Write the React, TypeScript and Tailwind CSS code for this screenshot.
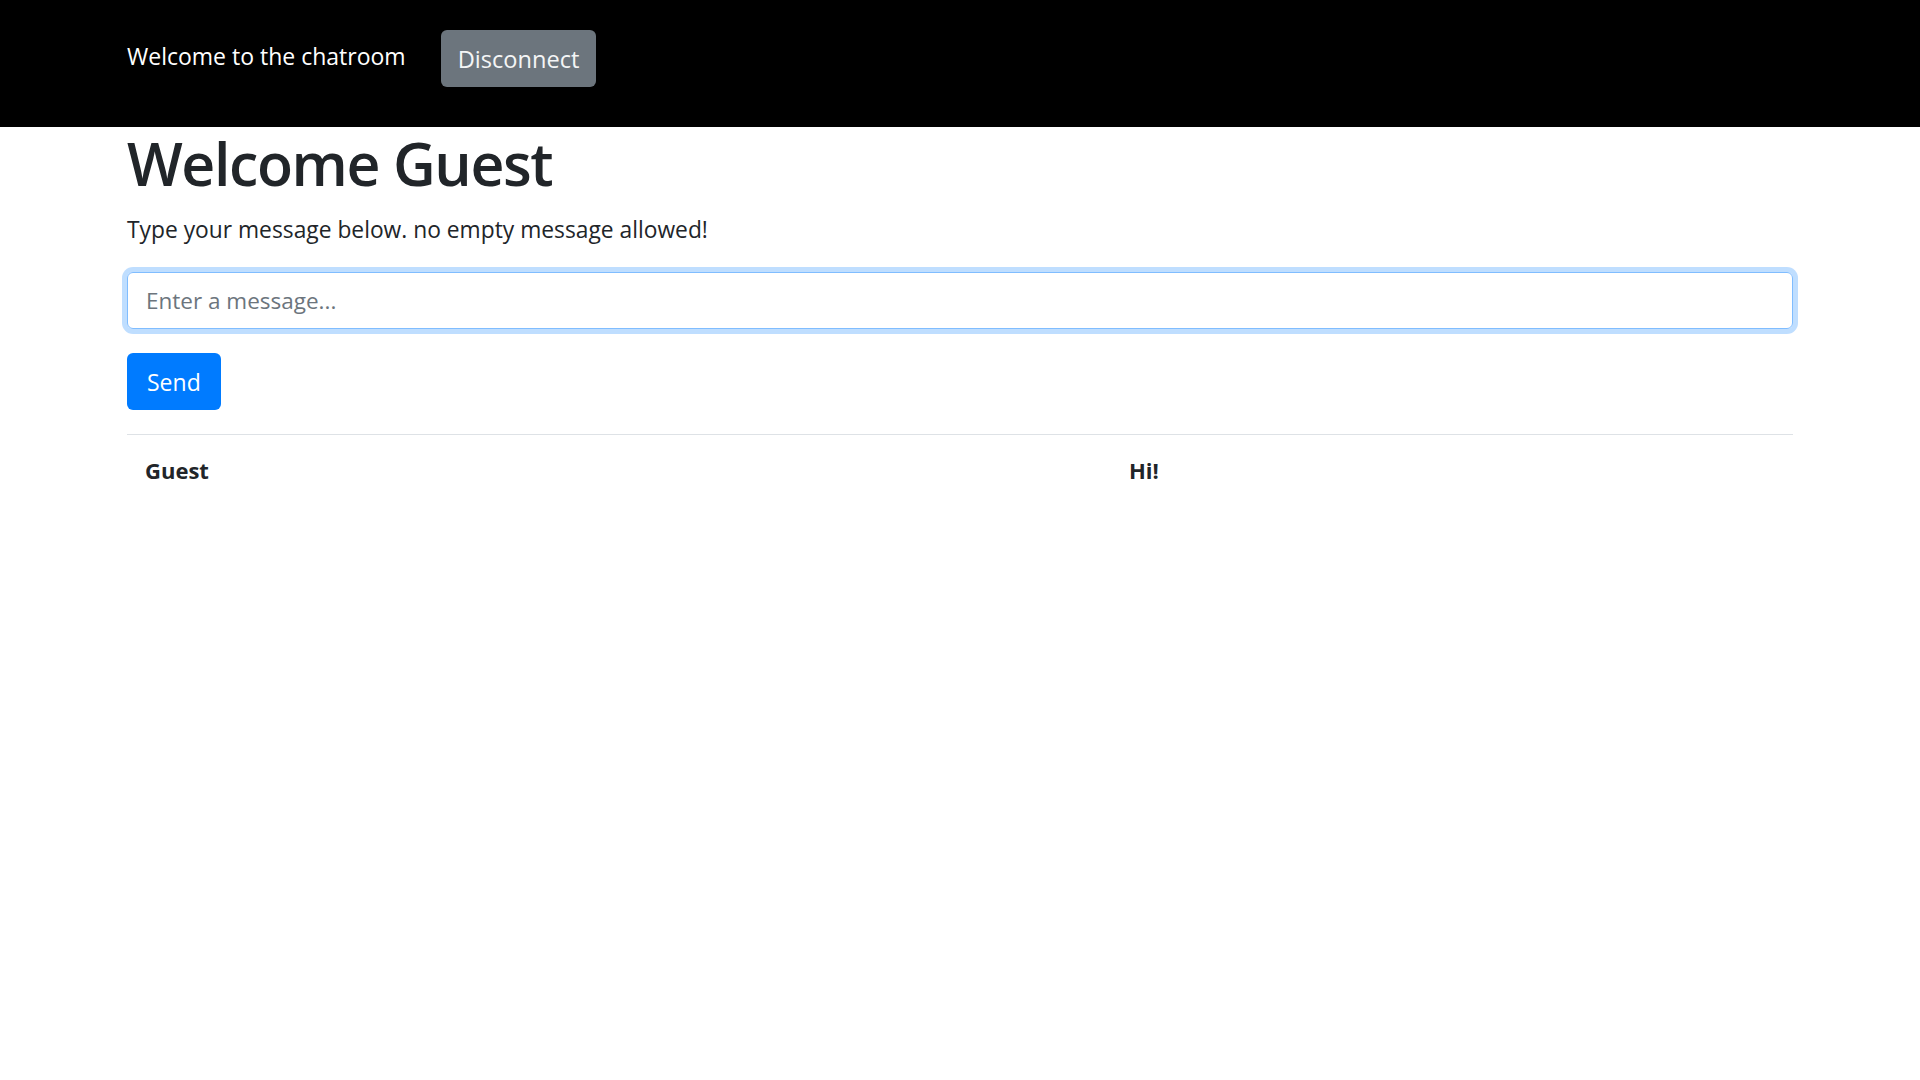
import { useState } from "react";

const font = { fontFamily: '"Open Sans", "Noto Sans", sans-serif' };

export default function App() {
  const [message, setMessage] = useState("");
  const messages = [{ user: "Guest", text: "Hi!" }];

  return (
    <div className="min-h-screen bg-white text-[#212529]" style={font}>
      {/* Navbar */}
      <nav className="h-[127px] bg-black">
        <div className="mx-auto w-[1666px] pt-[30px] flex items-center h-[87px]">
          <span className="text-[23px] text-white mr-[35px] mb-[4px]">Welcome to the chatroom</span>
          <button className="h-[57px] px-[17px] pt-[3px] rounded-[6px] bg-[#6c757d] text-[#f4f5f6] text-[23.6px] leading-none">
            Disconnect
          </button>
        </div>
      </nav>

      {/* Main */}
      <main className="mx-auto w-[1666px]">
        <h1 className="text-[59px] font-semibold tracking-[-1.4px] leading-[72px] mb-[13px]">Welcome Guest</h1>
        <p className="text-[22.8px] leading-[36px] mb-[24px]">
          Type your message below. no empty message allowed!
        </p>

        <input
          autoFocus
          value={message}
          onChange={(e) => setMessage(e.target.value)}
          placeholder="Enter a message..."
          className="block w-full h-[57px] px-[18px] text-[22.5px] rounded-[6px] border-[1.5px] border-[#80bdff] shadow-[0_0_0_5px_rgba(0,123,255,0.25)] outline-none caret-[#212529] placeholder:text-[#6c757d] mb-[24px]"
        />

        <button className="h-[57px] px-[20px] pt-[1px] rounded-[6px] bg-[#007bff] text-white text-[23px] leading-none mb-[24px]">
          Send
        </button>

        <div className="border-t border-[#dee2e6]">
          {messages.map((m, i) => (
            <div key={i} className="grid grid-cols-[984px_1fr] text-[22px] font-bold leading-[36px]">
              <div className="px-[18px] pt-[17px] pb-[18px]">{m.user}</div>
              <div className="px-[18px] pt-[17px] pb-[18px]">{m.text}</div>
            </div>
          ))}
        </div>
      </main>
    </div>
  );
}
